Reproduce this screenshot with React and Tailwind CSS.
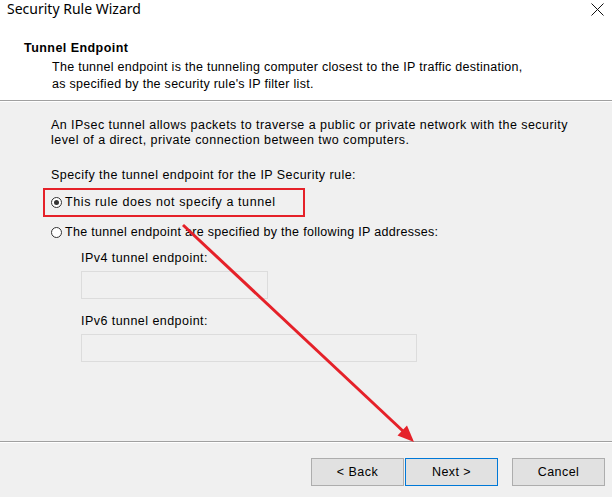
import React from 'react';

const FONT = { fontFamily: '"Liberation Sans", Arial, sans-serif' };

function Radio({ checked, label, tight }) {
  return (
    <label className="flex h-[15px] items-center leading-[15px]">
      <span className="ml-[-1px] flex h-[11px] w-[11px] items-center justify-center rounded-full border border-[#333333] bg-white">
        {checked && <span className="h-[5px] w-[5px] rounded-full bg-[#333333]" />}
      </span>
      <span className={tight ? 'ml-[3px] tracking-[0.3px]' : 'ml-[3px] tracking-[0.6px]'}>{label}</span>
    </label>
  );
}

function Field({ label, width, top }) {
  return (
    <div className={top}>
      <div className="leading-[15px]">{label}</div>
      <div className={`mt-[5px] h-[28px] ${width} border border-[#dcdcdc] bg-[#f0f0f0]`} />
    </div>
  );
}

function Button({ children, primary }) {
  return (
    <button
      className={`flex h-[28px] w-[93px] items-center justify-center border bg-[#e1e1e1] text-black ${
        primary ? 'border-[#0078d7]' : 'border-[#adadad]'
      }`}
    >
      {children}
    </button>
  );
}

export default function App() {
  return (
    <div
      className="relative flex h-[497px] w-[612px] flex-col overflow-hidden bg-[#f0f0f0] text-[12.5px] tracking-[0.45px] text-black"
      style={FONT}
    >
      <header className="h-[101px] border-b border-[#a0a0a0] bg-white">
        <div className="flex items-start justify-between pl-[7px] pr-[8px]">
          <span
            className="text-[14px] leading-[18px] tracking-normal"
            style={{ fontFamily: '"Noto Sans", "Open Sans", sans-serif' }}
          >
            Security Rule Wizard
          </span>
          <svg width="13" height="13" viewBox="0 0 13 13" className="mt-[3px]">
            <path d="M0.5 0.5 L12.5 12.5 M12.5 0.5 L0.5 12.5" stroke="#111" strokeWidth="1" />
          </svg>
        </div>
        <div className="mt-[23px] pl-[24px] font-bold leading-[15px]">Tunnel Endpoint</div>
        <p className="mt-[3px] pl-[52px] leading-[17px] tracking-[0.28px]">
          The tunnel endpoint is the tunneling computer closest to the IP traffic destination,
          <br />
          as specified by the security rule's IP filter list.
        </p>
      </header>

      <main className="flex-1 border-t border-white pl-[51px]">
        <p className="mt-[16px] leading-[15px]">
          An IPsec tunnel allows packets to traverse a public or private network with the security
          <br />
          level of a direct, private connection between two computers.
        </p>
        <p className="mt-[20px] leading-[15px]">Specify the tunnel endpoint for the IP Security rule:</p>
        <div className="mt-[12px] pl-[1px]">
          <Radio checked label="This rule does not specify a tunnel" />
        </div>
        <div className="mt-[15px] pl-[1px]">
          <Radio tight label="The tunnel endpoint are specified by the following IP addresses:" />
        </div>
        <div className="pl-[30px]">
          <Field label="IPv4 tunnel endpoint:" width="w-[187px]" top="mt-[11px]" />
          <Field label="IPv6 tunnel endpoint:" width="w-[336px]" top="mt-[15px]" />
        </div>
      </main>

      <footer className="h-[56px] border-t border-[#a0a0a0]">
        <div className="h-full border-t border-white">
          <div className="flex justify-end pr-[7px] pt-[15px]">
            <Button>&lt; Back</Button>
            <div className="ml-[1px]">
              <Button primary>Next &gt;</Button>
            </div>
            <div className="ml-[14px]">
              <Button>Cancel</Button>
            </div>
          </div>
        </div>
      </footer>

      {/* annotation overlay */}
      <div className="pointer-events-none absolute left-[43px] top-[188px] h-[29px] w-[262px] border-2 border-[#e52129]" />
      <svg className="pointer-events-none absolute left-0 top-0" width="612" height="497">
        <line x1="183" y1="225" x2="404" y2="432" stroke="#e52129" strokeWidth="3" />
        <polygon points="414,442 407,425.5 397.5,435.5" fill="#e52129" />
      </svg>
    </div>
  );
}
